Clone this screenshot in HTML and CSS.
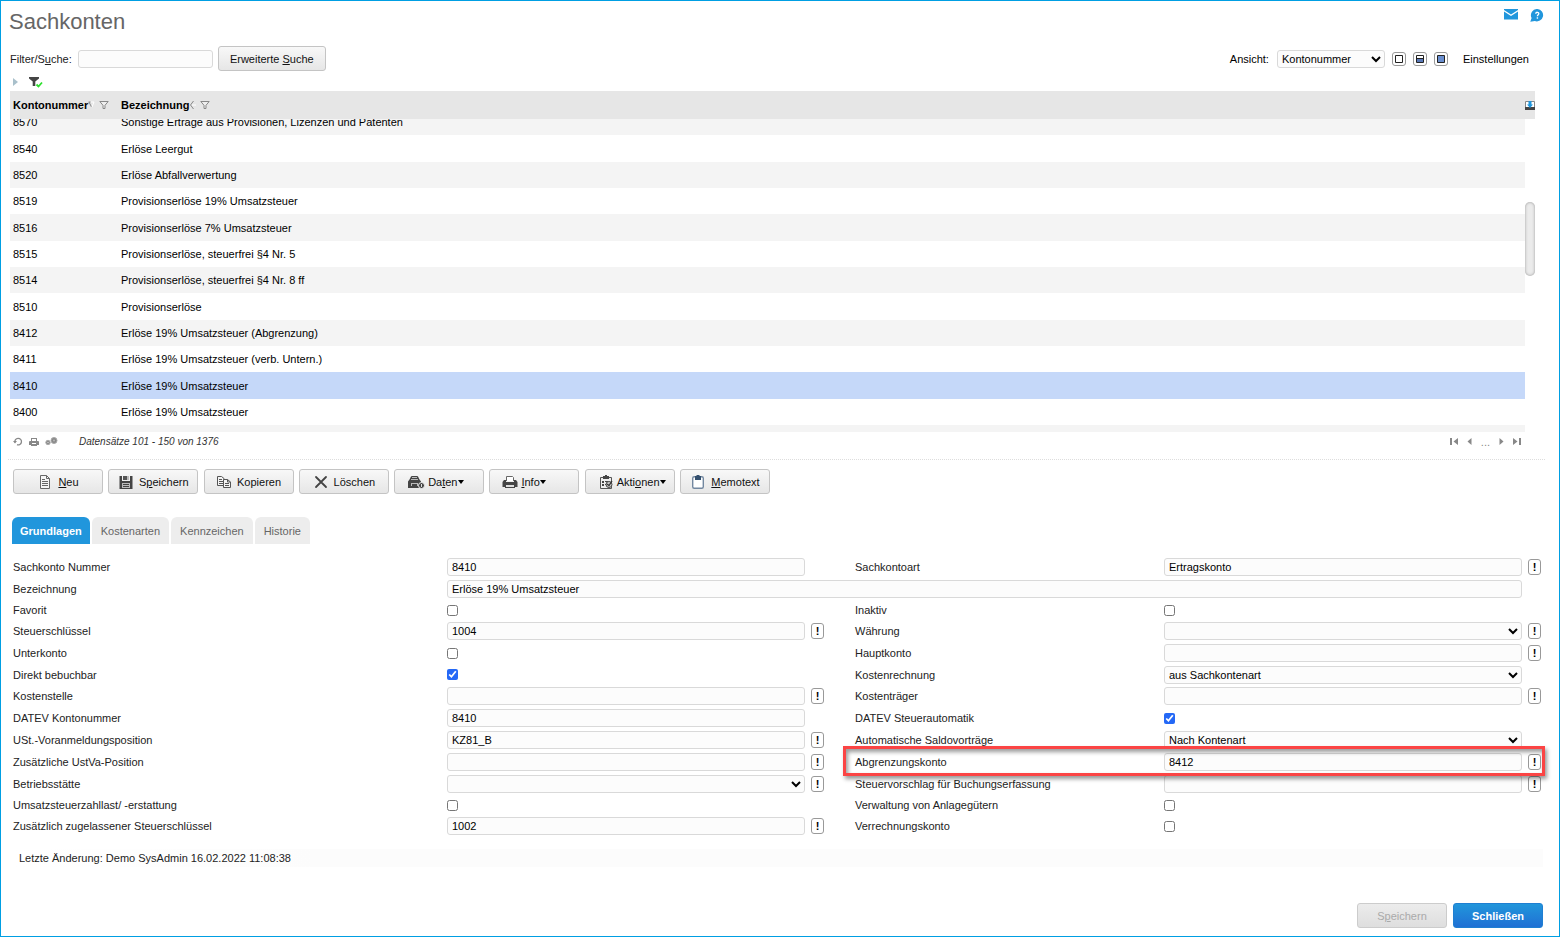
FILE: index.html
```html
<!DOCTYPE html>
<html lang="de">
<head>
<meta charset="utf-8">
<title>Sachkonten</title>
<link rel="stylesheet" href="styles.css">
</head>
<body>
<div class="app">
  <header class="head">
    <h1 class="title">Sachkonten</h1>
    <nav class="head-links">
      <a href="#" aria-label="Nachricht"><svg width="14" height="11" viewBox="0 0 14 11"><path fill="#2196dc" d="M0 0h14v1L7 5.500 0 1zM0 2.500l7 4.500 7-4.500V10.500H0z"/></svg></a>
      <a href="#" aria-label="Hilfe"><svg width="14" height="13" viewBox="0 0 14 13"><path fill="#2196dc" d="M7.500 0a6.200 6.200 0 1 1-2.700 12L.3 12.800 1.600 9A6.200 6.200 0 0 1 7.500 0z"/><path fill="none" stroke="#fff" stroke-width="1.300" d="M5.700 4.700c.2-2 3.300-1.800 3.100 0-.1 1-1.400 1.200-1.400 2.600"/><path fill="#fff" d="M6.700 8.300h1.400v1.400H6.700z"/></svg></a>
    </nav>
  </header>

  <section class="search">
    <label for="filter">Filter/S<u>u</u>che:</label>
    <input class="field filter" id="filter" type="text">
    <button class="btn btn-search" type="button"><span>Erweiterte <u>S</u>uche</span></button>
    <div class="view">
      <label for="view">Ansicht:</label>
      <select class="field view-select" id="view"><option>Kontonummer</option></select>
      <div class="layouts">
        <button class="mini" type="button" aria-label="Nur Liste"><svg width="8" height="8" viewBox="0 0 8 8"><path fill="#fff" stroke="#222" d="M.5.5h7v7h-7z"/></svg></button>
        <button class="mini" type="button" aria-label="Geteilt"><svg width="8" height="8" viewBox="0 0 8 8"><path fill="#fff" stroke="#222" d="M.5.5h7v7h-7z"/><path fill="#5a79b8" d="M1 4h6v3H1z"/><path fill="#222" d="M1 3h6v1H1z"/></svg></button>
        <button class="mini" type="button" aria-label="Nur Maske"><svg width="8" height="8" viewBox="0 0 8 8"><path fill="#6a8fd0" stroke="#222" d="M.5.5h7v7h-7z"/></svg></button>
      </div>
      <a class="settings" href="#">Einstellungen</a>
    </div>
  </section>

  <div class="filterbar">
    <svg width="5" height="8" viewBox="0 0 5 8"><path fill="#a9c0cb" d="M0 0l5 4-5 4z"/></svg>
    <svg width="14" height="11" viewBox="0 0 14 11"><path fill="#444" d="M0 0h10v1.500L6.300 4.500V9H3.700V4.500L0 1.500z"/><path fill="none" stroke="#2de02d" stroke-width="1.800" d="M7.500 7.500l2 2 3.500-4"/></svg>
  </div>

  <div class="list">
    <div class="list-view">
      <table class="table">
        <colgroup><col class="col-no"><col><col class="col-bar"></colgroup>
        <thead>
          <tr>
            <th><span class="th">Kontonummer<svg width="7" height="8" viewBox="0 0 7 8"><path fill="none" stroke="#888" d="M.5 1h2M1 1l2.500 5"/><path fill="none" stroke="#fff" d="M4 6l2-5H3"/></svg><svg class="funnel" width="10" height="8" viewBox="0 0 10 8"><path fill="#eee" stroke="#888" d="M.8.500h8.400L6 4.300v3.200H4V4.300z"/></svg></span></th>
            <th><span class="th">Bezeichnung<svg width="7" height="8" viewBox="0 0 7 8"><path fill="none" stroke="#888" d="M4.500 0L1.500 4l3 4"/><path stroke="#fff" d="M3 4h4"/></svg><svg class="funnel" width="10" height="8" viewBox="0 0 10 8"><path fill="#eee" stroke="#888" d="M.8.500h8.400L6 4.300v3.200H4V4.300z"/></svg></span></th>
            <th class="pin"><svg width="10" height="9" viewBox="0 0 10 9"><path fill="#fff" stroke="#888" d="M.5.500h9v8h-9z"/><path fill="#444" d="M0 6h10v3H0z"/><path fill="#2196dc" d="M3.500 0h3v3.500H8L5 7 2 3.500h1.500z"/></svg></th>
          </tr>
        </thead>
        <tbody>
          <tr><td>8570</td><td>Sonstige Erträge aus Provisionen, Lizenzen und Patenten</td></tr>
          <tr><td>8540</td><td>Erlöse Leergut</td></tr>
          <tr><td>8520</td><td>Erlöse Abfallverwertung</td></tr>
          <tr><td>8519</td><td>Provisionserlöse 19% Umsatzsteuer</td></tr>
          <tr><td>8516</td><td>Provisionserlöse 7% Umsatzsteuer</td></tr>
          <tr><td>8515</td><td>Provisionserlöse, steuerfrei §4 Nr. 5</td></tr>
          <tr><td>8514</td><td>Provisionserlöse, steuerfrei §4 Nr. 8 ff</td></tr>
          <tr><td>8510</td><td>Provisionserlöse</td></tr>
          <tr><td>8412</td><td>Erlöse 19% Umsatzsteuer (Abgrenzung)</td></tr>
          <tr><td>8411</td><td>Erlöse 19% Umsatzsteuer (verb. Untern.)</td></tr>
          <tr class="selected"><td>8410</td><td>Erlöse 19% Umsatzsteuer</td></tr>
          <tr><td>8400</td><td>Erlöse 19% Umsatzsteuer</td></tr>
          <tr><td></td><td></td></tr>
        </tbody>
      </table>
    </div>
    <div class="thumb"></div>
  </div>

  <div class="pager">
    <div class="pager-tools">
      <svg width="10" height="9" viewBox="0 0 10 9"><path fill="none" stroke="#888" stroke-width="1.300" d="M2 5.500a3.300 3.300 0 1 1 2 2.200"/><path fill="#888" d="M0 4h4L2 6.500z"/></svg>
      <svg width="10" height="8" viewBox="0 0 10 8"><path fill="#888" d="M2 0h6v3h1.500l.5 1v3H8v1H2V7H0V4l.5-1H2z"/><path fill="#fff" d="M3 1h4v2H3zM3 5h4v1H3z"/></svg>
      <svg width="13" height="9" viewBox="0 0 13 9"><circle cx="3" cy="5.500" r="2.200" fill="#888" stroke="#aaa"/><circle cx="9" cy="3.500" r="3" fill="#888" stroke="#aaa"/><circle cx="3" cy="5.500" r=".8" fill="#ccc"/><circle cx="9" cy="3.500" r=".9" fill="#bbb"/></svg>
    </div>
    <em class="count">Datensätze 101 - 150 von 1376</em>
    <div class="pages">
      <a href="#" aria-label="Erste Seite"><svg width="8" height="7" viewBox="0 0 8 7"><path fill="#888" d="M0 0h2v7H0zM8 0v7L3.500 3.500z"/></svg></a>
      <a href="#" aria-label="Vorherige Seite"><svg width="5" height="7" viewBox="0 0 5 7"><path fill="#888" d="M4.500 0v7L.5 3.500z"/></svg></a>
      <span>...</span>
      <a href="#" aria-label="Nächste Seite"><svg width="5" height="7" viewBox="0 0 5 7"><path fill="#888" d="M.5 0v7l4-3.500z"/></svg></a>
      <a href="#" aria-label="Letzte Seite"><svg width="8" height="7" viewBox="0 0 8 7"><path fill="#888" d="M6 0h2v7H6zM0 0v7l4.500-3.500z"/></svg></a>
    </div>
  </div>

  <div class="toolbar">
    <button class="btn" type="button"><svg width="16" height="14" viewBox="0 0 16 14"><path fill="#f4f4f4" stroke="#666" d="M3.500.5h6l3 3v10h-9z"/><path fill="none" stroke="#666" d="M9.500.5v3h3M5 4.500h3M5 6.500h6M5 8.500h6M5 10.500h6"/></svg><span><u>N</u>eu</span></button>
    <button class="btn" type="button"><svg width="16" height="14" viewBox="0 0 16 14"><path fill="#444" d="M1.500 1H4v5h8V1h2.500v13h-13z"/><path fill="#555" d="M5 1h4v4H5z"/><path fill="#bbb" d="M9 1h2v4H9zM4 8h8v5H4z"/><path fill="#444" d="M5 9h6v1H5zM5 11h6v1H5z"/></svg><span>S<u>p</u>eichern</span></button>
    <button class="btn" type="button"><svg width="16" height="14" viewBox="0 0 16 14"><path fill="#f4f4f4" stroke="#555" d="M1.500 1.500h4l2.500 2v7H1.500z"/><path stroke="#555" d="M3 4.500h3M3 6.500h4M3 8.500h4"/><path fill="#f4f4f4" stroke="#555" d="M7.500 4.500h4l3 2.500v5.500h-7z"/><path fill="none" stroke="#555" d="M11.500 4.500V7h3M9 8.500h4M9 10.500h4"/></svg><span>Kopieren</span></button>
    <button class="btn" type="button"><svg width="16" height="14" viewBox="0 0 16 14"><path fill="none" stroke="#444" stroke-width="1.800" stroke-linecap="round" d="M3 2l10 10M13 2L3 12"/></svg><span>Löschen</span></button>
    <button class="btn btn-menu" type="button"><svg width="18" height="14" viewBox="0 0 18 14"><path fill="#444" d="M1 6.500L2.500 4.500 4 1.500Q4.300 1 5 1h5q.7 0 1 .5l1.500 3L14 6.500V13H1z"/><path fill="#bbb" d="M5 2h5v1H5zM4 4h7v1H4zM4 8h7v1H4zM4 9h1v2H4zM10 9h1v2h-1z"/><circle cx="14.500" cy="10.500" r="3" fill="#444" stroke="#eee"/><path fill="#ddd" d="M14 9h1v3h-1z"/></svg><span>Da<u>t</u>en<i class="caret"></i></span></button>
    <button class="btn btn-menu" type="button"><svg width="16" height="14" viewBox="0 0 16 14"><path fill="#fff" stroke="#666" d="M4.500 6V1.500h6l1 1V6"/><path fill="#444" d="M2 5h2v2h8V5h2l1.500 2v5H13v1H3v-1H.5V7z"/><path fill="#ddd" d="M4 10h8v2H4z"/></svg><span><u>I</u>nfo<i class="caret"></i></span></button>
    <button class="btn btn-menu" type="button"><svg width="16" height="14" viewBox="0 0 16 14"><path fill="#eee" stroke="#555" d="M2.500 2.500h11v11h-11z"/><path fill="#444" d="M5 1h2V0h2v1h2v3H5zM4 6h2v2H4zM4 9h2v2H4zM7 6h3v1H7zM7 9h1v1H7z"/><circle cx="11" cy="9.500" r="3" fill="#ccc" stroke="#444"/><path fill="none" stroke="#333" stroke-width="1.300" d="M9 9l2 1.500L14 6"/></svg><span>Akti<u>o</u>nen<i class="caret"></i></span></button>
    <button class="btn" type="button"><svg width="16" height="14" viewBox="0 0 16 14"><rect x="2.700" y="1.700" width="10.600" height="11.600" rx="1.500" fill="#fff" stroke="#7388a0" stroke-width="1.400"/><path fill="#34506f" d="M5 1h1.500V0h3v1H11v4H5z"/></svg><span><u>M</u>emotext</span></button>
  </div>

  <div class="tabs" role="tablist">
    <button class="tab active" type="button" role="tab" aria-selected="true">Grundlagen</button>
    <button class="tab" type="button" role="tab">Kostenarten</button>
    <button class="tab" type="button" role="tab">Kennzeichen</button>
    <button class="tab" type="button" role="tab">Historie</button>
  </div>

  <form class="form">
    <div class="row">
      <label for="nr">Sachkonto Nummer</label><input class="field" id="nr" type="text" value="8410">
      <label class="second" for="art">Sachkontoart</label><input class="field" id="art" type="text" value="Ertragskonto"><button class="hint" type="button">!</button>
    </div>
    <div class="row">
      <label for="bez">Bezeichnung</label><input class="field wide" id="bez" type="text" value="Erlöse 19% Umsatzsteuer">
    </div>
    <div class="row checks">
      <label for="fav">Favorit</label><input class="check" id="fav" type="checkbox">
      <label class="second" for="inaktiv">Inaktiv</label><input class="check" id="inaktiv" type="checkbox">
    </div>
    <div class="row">
      <label for="steuer">Steuerschlüssel</label><input class="field" id="steuer" type="text" value="1004"><button class="hint" type="button">!</button>
      <label class="second" for="waehrung">Währung</label><select class="field" id="waehrung"><option></option></select><button class="hint" type="button">!</button>
    </div>
    <div class="row">
      <label for="unter">Unterkonto</label><input class="check" id="unter" type="checkbox">
      <label class="second" for="haupt">Hauptkonto</label><input class="field" id="haupt" type="text"><button class="hint" type="button">!</button>
    </div>
    <div class="row tight">
      <label for="direkt">Direkt bebuchbar</label><input class="check" id="direkt" type="checkbox" checked>
      <label class="second" for="rechnung">Kostenrechnung</label><select class="field" id="rechnung"><option>aus Sachkontenart</option></select>
    </div>
    <div class="row">
      <label for="stelle">Kostenstelle</label><input class="field" id="stelle" type="text"><button class="hint" type="button">!</button>
      <label class="second" for="traeger">Kostenträger</label><input class="field" id="traeger" type="text"><button class="hint" type="button">!</button>
    </div>
    <div class="row">
      <label for="datev">DATEV Kontonummer</label><input class="field" id="datev" type="text" value="8410">
      <label class="second" for="auto">DATEV Steuerautomatik</label><input class="check" id="auto" type="checkbox" checked>
    </div>
    <div class="row">
      <label for="ust">USt.-Voranmeldungsposition</label><input class="field" id="ust" type="text" value="KZ81_B"><button class="hint" type="button">!</button>
      <label class="second" for="saldo">Automatische Saldovorträge</label><select class="field" id="saldo"><option>Nach Kontenart</option></select>
    </div>
    <div class="row">
      <label for="ustva">Zusätzliche UstVa-Position</label><input class="field" id="ustva" type="text"><button class="hint" type="button">!</button>
      <label class="second" for="abgr">Abgrenzungskonto</label><input class="field" id="abgr" type="text" value="8412"><button class="hint" type="button">!</button>
      <div class="marker"></div>
    </div>
    <div class="row">
      <label for="betrieb">Betriebsstätte</label><select class="field" id="betrieb"><option></option></select><button class="hint" type="button">!</button>
      <label class="second" for="vorschlag">Steuervorschlag für Buchungserfassung</label><input class="field" id="vorschlag" type="text"><button class="hint" type="button">!</button>
    </div>
    <div class="row checks">
      <label for="zahllast">Umsatzsteuerzahllast/ -erstattung</label><input class="check" id="zahllast" type="checkbox">
      <label class="second" for="anlage">Verwaltung von Anlagegütern</label><input class="check" id="anlage" type="checkbox">
    </div>
    <div class="row">
      <label for="zusatz">Zusätzlich zugelassener Steuerschlüssel</label><input class="field" id="zusatz" type="text" value="1002"><button class="hint" type="button">!</button>
      <label class="second" for="verr">Verrechnungskonto</label><input class="check" id="verr" type="checkbox">
    </div>
  </form>

  <p class="changed">Letzte Änderung: Demo SysAdmin 16.02.2022 11:08:38</p>

  <footer class="foot">
    <button class="btn" type="button" disabled><span>S<u>p</u>eichern</span></button>
    <button class="btn primary" type="button">Schließen</button>
  </footer>
</div>
<script src="list.js"></script>
</body>
</html>
```
FILE: list.js
```js
document.querySelector('.list-view').scrollTop = 10;
```
FILE: styles.css
```css
* { box-sizing: border-box; }
body, button, input, select { font: 11px/14px "Liberation Sans", Arial, sans-serif; }
body { margin: 0; color: #222; background: #fff; }
svg { display: block; flex: none; }
a { color: inherit; text-decoration: none; }
button { padding: 0; color: inherit; }

.app { display: flex; flex-direction: column; min-height: 100vh; border: 1px solid #009fe3; }

.head { display: flex; justify-content: space-between; padding: 7px 15px 0 8px; height: 45px; }
.title { margin: 0; font-size: 22px; line-height: 27px; font-weight: normal; color: #666; }
.head-links { display: flex; gap: 12px; padding-top: 1px; }

.field { width: 100%; height: 18px; padding: 0 4px; color: #000; background: #fcfcfc; border: 1px solid #d9d9d9; border-radius: 3px; }
select.field { padding: 0; }

.btn { display: flex; align-items: center; justify-content: center; gap: 5px; width: 90px; height: 25px; color: #111; background: linear-gradient(#f8f8f8, #e6e6e6); border: 1px solid #c4c4c4; border-radius: 3px; }
.btn:disabled { color: #aaa; background: linear-gradient(#ececec, #dedede); border-color: #ccc; }
.btn.primary { color: #fff; font-weight: bold; background: linear-gradient(#2196db, #2070d4); border-color: #1f7fd2; }
.caret { display: inline-block; border: 3px solid transparent; border-top: 4px solid #000; border-bottom: 0; vertical-align: 2px; }

.search { display: flex; align-items: center; height: 25px; padding: 0 30px 0 9px; white-space: nowrap; }
.search .filter { width: 135px; margin: 0 5px 0 6px; }
.search .btn-search { width: 108px; }
.view { display: flex; align-items: center; margin-left: auto; color: #000; }
.view .view-select { width: 108px; margin: 0 7px 0 8px; }
.layouts { display: flex; gap: 7px; margin-right: 15px; }
.mini { display: flex; align-items: center; justify-content: center; width: 14px; height: 14px; background: #fff; border: 1px solid #999; border-radius: 3px; }

.filterbar { display: flex; align-items: center; gap: 11px; height: 20px; padding: 2px 0 0 12px; }

.list { position: relative; margin: 0 24px 0 9px; }
.list-view { height: 341px; overflow: hidden; }
.table { width: 100%; table-layout: fixed; border-spacing: 0; color: #000; }
.col-no { width: 108px; }
.col-bar { width: 10px; }
.table th { position: sticky; top: 0; height: 28px; padding: 0 0 0 3px; text-align: left; background: #e6e6e6; }
.table th.pin { padding: 0; }
.th { display: flex; align-items: center; }
.funnel { margin-left: 4px; }
.table td { height: 26px; padding: 0 0 0 3px; }
.table tr:nth-child(3n+2) td { height: 27px; }
.table tr:nth-child(odd) td { background: #f4f4f4; }
.table .selected.selected td { background: #c5d8f9; }
.thumb { position: absolute; right: 0; top: 111px; width: 10px; height: 74px; background: #ebebeb; border-radius: 5px; box-shadow: inset 0 0 3px #999; }

.pager { display: flex; align-items: center; height: 28px; margin: 0 14px 0 7px; padding: 0 24px 8px 5px; border-bottom: 1px dotted #ddd; }
.pager-tools { display: flex; align-items: center; gap: 6px; width: 66px; }
.count { font-size: 10px; color: #333; }
.pages { display: flex; align-items: center; gap: 9px; margin-left: auto; color: #888; }

.toolbar { display: flex; justify-content: space-between; width: 757px; margin: 9px 0 0 12px; }
.toolbar .btn-menu { justify-content: flex-start; padding-left: 12px; gap: 3px; }

.tabs { display: flex; gap: 2px; margin: 23px 0 0 11px; }
.tab { height: 27px; padding: 0 9px; color: #666; background: #ededed; border: 0; border-radius: 6px 6px 0 0; }
.tab.active { padding: 0 8px; color: #fff; font-weight: bold; background: #2196dc; }

.form { margin: 12px 17px 0 12px; }
.row { position: relative; display: grid; grid-template-columns: minmax(0, 434fr) minmax(0, 358fr) 50px minmax(0, 309fr) minmax(0, 358fr) 20px; align-items: center; height: 22px; }
.row.tight { height: 21px; }
.row.checks { height: 20px; }
.second { grid-column: 4; }
.wide { grid-column: 2 / 6; }
.check { width: 11px; height: 11px; margin: 0; accent-color: #2468f6; }
.hint { width: 13px; height: 16px; margin-left: 6px; font-weight: bold; line-height: 13px; color: #000; background: #fff; border: 1px solid #999; border-radius: 3px; }
.marker { position: absolute; z-index: 1; grid-column: 4 / -1; inset: -5px -3px -3px -12px; border: 3px solid #fb4444; box-shadow: 2px 3px 4px #0006, inset 2px 3px 4px #0006; pointer-events: none; }

.changed { margin: 12px 16px 0 14px; padding: 2px 4px; background: linear-gradient(90deg, #fff, #fcfcfc 300px); }
.foot { display: flex; justify-content: flex-end; gap: 6px; margin-top: auto; padding: 0 16px 8px; }
```
